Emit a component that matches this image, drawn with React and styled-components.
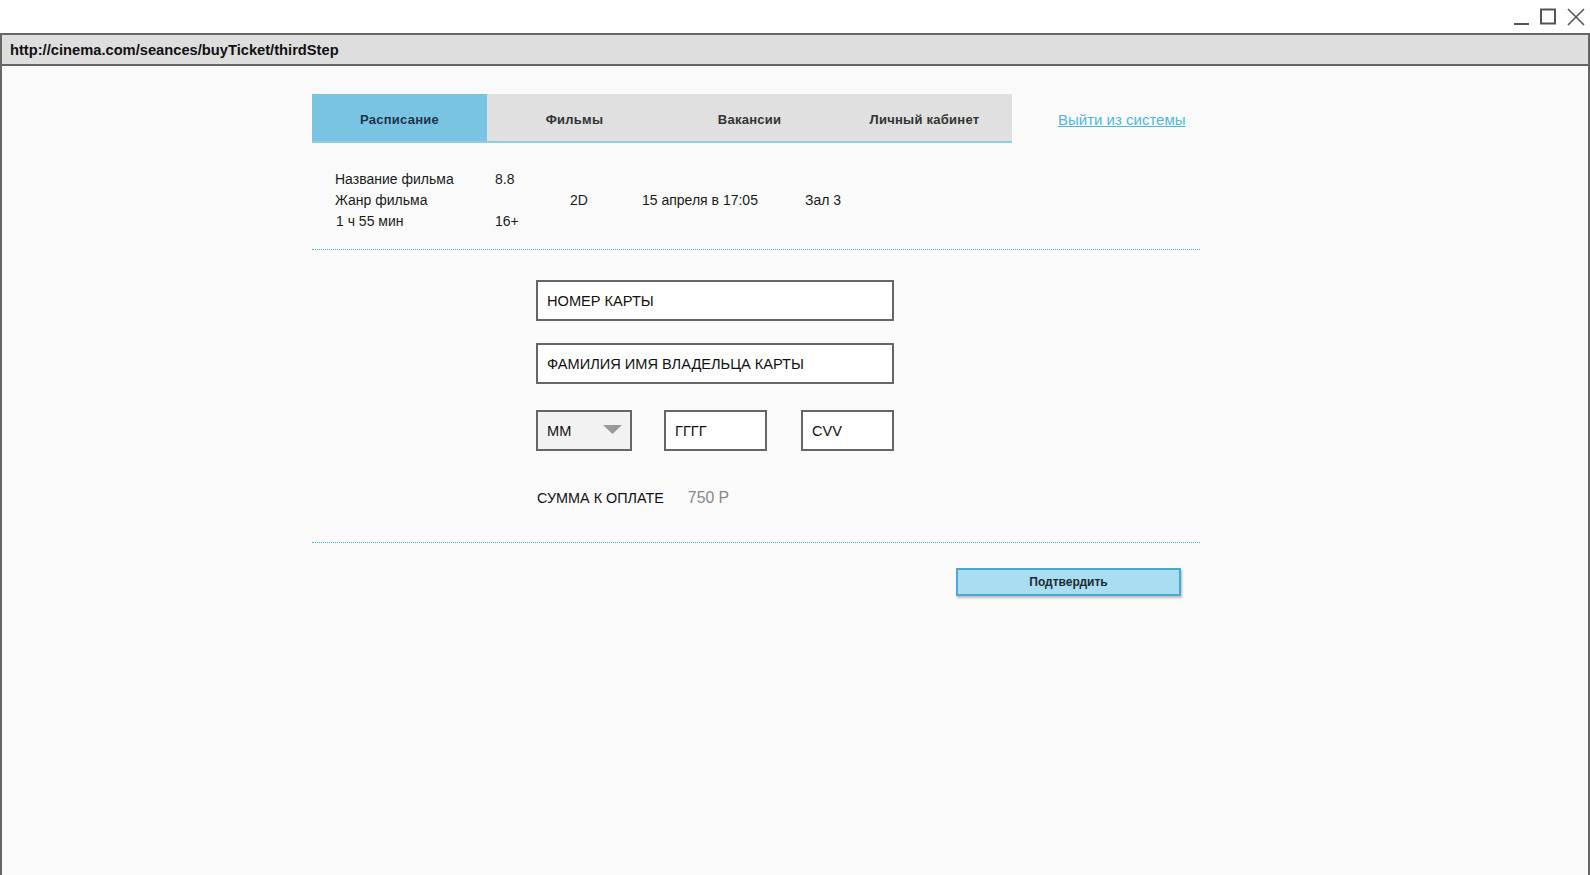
import React from "react";
import styled, { createGlobalStyle } from "styled-components";

const GlobalStyle = createGlobalStyle`
  html, body { margin: 0; padding: 0; background: #ffffff; }
  body { font-family: "Liberation Sans", Arial, sans-serif; color: #222; }
  * { box-sizing: border-box; }
`;

const Screen = styled.div`
  width: 1590px;
  height: 875px;
  display: flex;
  flex-direction: column;
  overflow: hidden;
`;

const TitleBar = styled.div`
  height: 33px;
  flex: none;
  display: flex;
  justify-content: flex-end;
  align-items: center;
  gap: 9px;
  padding-right: 4px;
  background: #ffffff;
`;

const CtrlIcon = styled.svg`
  width: ${(p) => p.$size || 18}px;
  height: ${(p) => p.$size || 18}px;
  display: block;
  stroke: #555;
  fill: none;
  stroke-width: 2;
`;

const Window = styled.div`
  flex: 1;
  display: flex;
  flex-direction: column;
  border: 2px solid #666;
  border-bottom: none;
  background: #fafafa;
`;

const AddressBar = styled.div`
  height: 31px;
  flex: none;
  display: flex;
  align-items: center;
  padding: 1px 0 0 8px;
  background: #dedede;
  border-bottom: 2px solid #666;
  font-weight: bold;
  font-size: 14.7px;
  color: #111;
`;

const Content = styled.div`
  padding: 28px 0 0 310px;
  width: 1198px;
  display: flex;
  flex-direction: column;
`;

const NavRow = styled.div`
  display: flex;
  align-items: center;
`;

const Tabs = styled.div`
  display: flex;
  border-bottom: 2px solid #8fcfe2;
`;

const Tab = styled.div`
  width: 175px;
  height: 47px;
  display: flex;
  align-items: center;
  justify-content: center;
  padding-top: 4px;
  font-size: 13px;
  font-weight: bold;
  letter-spacing: 0.25px;
  color: ${(p) => (p.$active ? "#1e3446" : "#333")};
  background: ${(p) => (p.$active ? "#79c4e3" : "#e0e0e0")};
`;

const Logout = styled.a`
  margin-left: 46px;
  margin-top: 2px;
  font-size: 15px;
  color: #4db8df;
  text-decoration: underline;
  cursor: pointer;
`;

const InfoGrid = styled.div`
  margin-top: 25px;
  padding-left: 23px;
  display: grid;
  grid-template-columns: 160px 75px 72px 163px auto;
  grid-auto-rows: 21px;
  align-items: center;
  font-size: 14px;
  color: #1a1a1a;
`;

const Cell = styled.div`
  grid-column: ${(p) => p.$col};
  grid-row: ${(p) => p.$row};
  white-space: nowrap;
  padding-left: ${(p) => p.$indent || 0}px;
`;

const Divider = styled.div`
  width: 888px;
  border-top: 1px dotted #3cb9d2;
  margin-top: ${(p) => p.$mt}px;
`;

const Form = styled.div`
  padding-left: 224px;
  display: flex;
  flex-direction: column;
`;

const Field = styled.input`
  display: block;
  width: ${(p) => p.$w}px;
  height: 41px;
  margin-top: ${(p) => p.$mt || 0}px;
  border: 2px solid #666;
  background: #fff;
  padding: 1px 9px 0;
  font-family: "Liberation Sans", Arial, sans-serif;
  font-size: 14.6px;
  color: #111;
  outline: none;
  &::placeholder { color: #111; opacity: 1; }
`;

const SmallRow = styled.div`
  margin-top: 26px;
  display: flex;
  align-items: center;
`;

const Select = styled.div`
  width: 96px;
  height: 41px;
  border: 2px solid #666;
  background: #f2f2f2;
  display: flex;
  align-items: center;
  justify-content: space-between;
  padding: 1px 8px 0 9px;
  font-size: 14.6px;
  color: #111;
`;

const Caret = styled.svg`
  width: 19px;
  height: 9px;
  display: block;
  margin-top: -3px;
`;

const SmallField = styled(Field)`
  margin-left: ${(p) => p.$ml}px;
`;

const SumRow = styled.div`
  margin-top: 37px;
  height: 20px;
  display: flex;
  align-items: center;
  padding-left: 1px;
  font-size: 14.4px;
`;

const SumLabel = styled.span`
  color: #111;
`;

const SumValue = styled.span`
  margin-left: 24px;
  color: #888;
  font-size: 15.8px;
`;

const ButtonRow = styled.div`
  width: 888px;
  display: flex;
  justify-content: flex-end;
  padding-right: 19px;
  margin-top: 25px;
`;

const ConfirmButton = styled.button`
  width: 225px;
  height: 28px;
  border: 2px solid #49a9d1;
  background: #a8ddf2;
  box-shadow: 1px 2px 2px rgba(0, 0, 0, 0.25);
  font-family: "Liberation Sans", Arial, sans-serif;
  font-size: 12px;
  font-weight: bold;
  color: #1e2a33;
  cursor: pointer;
  padding: 0;
`;

const tabs = ["Расписание", "Фильмы", "Вакансии", "Личный кабинет"];

export default function App() {
  return (
    <Screen>
      <GlobalStyle />
      <TitleBar>
        <CtrlIcon viewBox="0 0 18 18">
          <line x1="2" y1="16" x2="17" y2="16" />
        </CtrlIcon>
        <CtrlIcon viewBox="0 0 18 18">
          <rect x="2" y="1.5" width="14" height="14" />
        </CtrlIcon>
        <CtrlIcon viewBox="0 0 20 20" $size={20}>
          <line x1="2" y1="2" x2="18" y2="18" strokeWidth="1.6" />
          <line x1="18" y1="2" x2="2" y2="18" strokeWidth="1.6" />
        </CtrlIcon>
      </TitleBar>
      <Window>
        <AddressBar>http://cinema.com/seances/buyTicket/thirdStep</AddressBar>
        <Content>
          <NavRow>
            <Tabs>
              {tabs.map((t, i) => (
                <Tab key={t} $active={i === 0}>
                  {t}
                </Tab>
              ))}
            </Tabs>
            <Logout>Выйти из системы</Logout>
          </NavRow>

          <InfoGrid>
            <Cell $col={1} $row={1}>Название фильма</Cell>
            <Cell $col={2} $row={1}>8.8</Cell>
            <Cell $col={1} $row={2}>Жанр фильма</Cell>
            <Cell $col={3} $row={2}>2D</Cell>
            <Cell $col={4} $row={2}>15 апреля в 17:05</Cell>
            <Cell $col={5} $row={2}>Зал 3</Cell>
            <Cell $col={1} $row={3} $indent={1}>1 ч 55 мин</Cell>
            <Cell $col={2} $row={3}>16+</Cell>
          </InfoGrid>

          <Divider $mt={18} />

          <Form>
            <Field $w={358} $mt={30} placeholder="НОМЕР КАРТЫ" />
            <Field $w={358} $mt={22} placeholder="ФАМИЛИЯ ИМЯ ВЛАДЕЛЬЦА КАРТЫ" />
            <SmallRow>
              <Select>
                <span>ММ</span>
                <Caret viewBox="0 0 19 9">
                  <polygon points="0,0 19,0 9.5,9" fill="#999" />
                </Caret>
              </Select>
              <SmallField $w={103} $ml={32} placeholder="ГГГГ" />
              <SmallField $w={93} $ml={34} placeholder="CVV" />
            </SmallRow>
            <SumRow>
              <SumLabel>СУММА К ОПЛАТЕ</SumLabel>
              <SumValue>750 Р</SumValue>
            </SumRow>
          </Form>

          <Divider $mt={34} />

          <ButtonRow>
            <ConfirmButton>Подтвердить</ConfirmButton>
          </ButtonRow>
        </Content>
      </Window>
    </Screen>
  );
}
